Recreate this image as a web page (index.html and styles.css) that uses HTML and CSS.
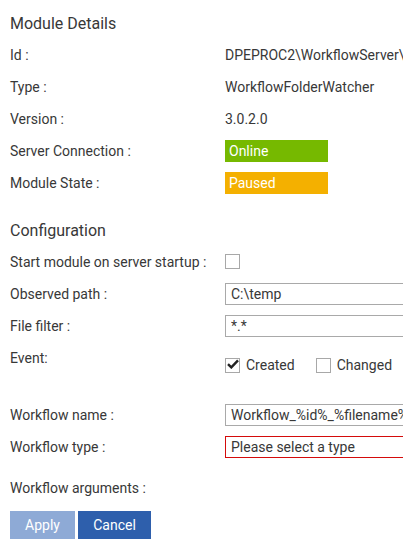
FILE: index.html
```html
<!DOCTYPE html>
<html>
<head>
<meta charset="utf-8">
<link rel="stylesheet" href="styles.css">
</head>
<body>
<div class="page">
  <h2 class="section-title">Module Details</h2>
  <div class="row"><div class="label">Id :</div><div class="value">DPEPROC2\WorkflowServer\WorkflowFolderWatcher</div></div>
  <div class="row"><div class="label">Type :</div><div class="value">WorkflowFolderWatcher</div></div>
  <div class="row"><div class="label">Version :</div><div class="value">3.0.2.0</div></div>
  <div class="row"><div class="label">Server Connection :</div><div class="value"><span class="badge badge-online">Online</span></div></div>
  <div class="row"><div class="label">Module State :</div><div class="value"><span class="badge badge-paused">Paused</span></div></div>

  <h2 class="section-title config-title">Configuration</h2>
  <div class="row"><div class="label">Start module on server startup :</div><div class="value"><span class="check"></span></div></div>
  <div class="row"><div class="label">Observed path :</div><div class="value"><input class="field" type="text" value="C:\temp"></div></div>
  <div class="row"><div class="label">File filter :</div><div class="value"><input class="field" type="text" value="*.*"></div></div>
  <div class="row"><div class="label">Event:</div>
    <div class="value">
      <div class="options">
        <label class="option"><span class="check checked"><svg width="12" height="10" viewBox="0 0 12 10"><path d="M1 5.2 L4.3 8.4 L11 1.4" fill="none" stroke="#222" stroke-width="2.4"/></svg></span>Created</label>
        <label class="option"><span class="check"></span>Changed</label>
      </div>
    </div>
  </div>
  <div class="row wf-first"><div class="label">Workflow name :</div><div class="value"><input class="field" type="text" value="Workflow_%id%_%filename%"></div></div>
  <div class="row"><div class="label">Workflow type :</div><div class="value"><select class="field select-invalid"><option>Please select a type</option></select></div></div>
  <div class="row args-row"><div class="label">Workflow arguments :</div><div class="value"></div></div>
  <div class="actions">
    <button class="btn btn-apply">Apply</button>
    <button class="btn btn-cancel">Cancel</button>
  </div>
</div>
</body>
</html>
```

FILE: styles.css
```css
html, body {
  margin: 0;
  padding: 0;
  background: #ffffff;
  overflow: hidden;
}
body {
  font-family: Roboto, "Liberation Sans", sans-serif;
  font-size: 14px;
  color: #383838;
}
.page {
  padding: 9px 0 0 10px;
  width: 600px;
}
.section-title {
  margin: 0;
  height: 30px;
  line-height: 30px;
  font-size: 16px;
  font-weight: 400;
  color: #383838;
}
.config-title {
  margin-top: 16.5px;
}
.row {
  display: flex;
  align-items: center;
  height: 32px;
}
.label {
  width: 215px;
  flex: none;
  white-space: nowrap;
}
.value {
  flex: none;
  white-space: nowrap;
  display: flex;
  align-items: center;
}
.badge {
  display: block;
  width: 99px;
  height: 22px;
  line-height: 22px;
  padding-left: 4px;
  color: #ffffff;
}
.badge-online { background: #76b900; }
.badge-paused { background: #f4b000; }
.check {
  display: inline-flex;
  align-items: center;
  justify-content: center;
  width: 13px;
  height: 13px;
  border: 1px solid #a8a8a8;
  background: #fff;
  box-sizing: content-box;
}
.check svg { margin-top: -2px; margin-left: 1px; }
.field {
  box-sizing: border-box;
  width: 200px;
  height: 22px;
  border: 1px solid #a9a9a9;
  border-radius: 0;
  padding: 0 5px;
  font-family: Roboto, "Liberation Sans", sans-serif;
  font-size: 14px;
  color: #383838;
  background: #fff;
  outline: none;
  margin: 0;
}
select.field {
  appearance: none;
  -webkit-appearance: none;
}
.select-invalid {
  border-color: #d40b0b;
}
.options {
  display: flex;
  align-items: center;
  margin-top: 15px;
}
.option {
  display: flex;
  align-items: center;
  gap: 6px;
  margin-right: 21px;
}
.wf-first {
  margin-top: 25.5px;
}
.args-row {
  margin-top: 9px;
}
.actions {
  display: flex;
  gap: 3px;
  margin-top: 7px;
}
.btn {
  height: 28px;
  border: none;
  padding: 0 15px;
  font-family: Roboto, "Liberation Sans", sans-serif;
  font-size: 14px;
  color: #ffffff;
  border-radius: 0;
}
.btn-apply { background: #8eaad6; width: 65px; }
.btn-cancel { background: #2e5fac; width: 73px; }
```
